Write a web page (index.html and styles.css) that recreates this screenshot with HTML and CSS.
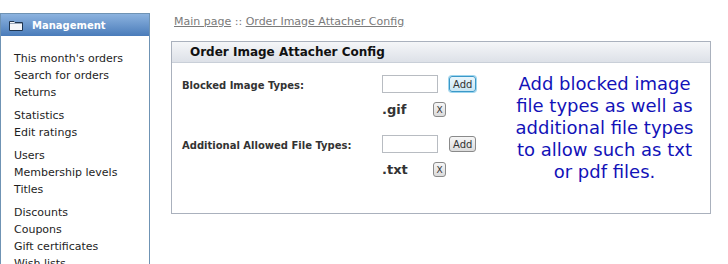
FILE: index.html
```html
<!DOCTYPE html>
<html lang="en">
<head>
    <meta charset="UTF-8">
    <title>Order Image Attacher Config</title>
    <link rel="stylesheet" href="styles.css">
</head>
<body>
    <div class="page">
        <div class="sidebar">
            <div class="side-head">
                <svg class="folder" width="14" height="11" viewBox="0 0 14 11">
                    <path d="M0.5 1.5 H5 L6 2.5 H13.5 V10.5 H0.5 Z" fill="#f4f6fa" stroke="#1f3550"/>
                    <path d="M1 3.5 H13" stroke="#9aa8bb"/>
                </svg>
                <span>Management</span>
            </div>
            <div class="side-links">
                <div class="group">
                    <a href="#">This month's orders</a>
                    <a href="#">Search for orders</a>
                    <a href="#">Returns</a>
                </div>
                <div class="group">
                    <a href="#">Statistics</a>
                    <a href="#">Edit ratings</a>
                </div>
                <div class="group">
                    <a href="#">Users</a>
                    <a href="#">Membership levels</a>
                    <a href="#">Titles</a>
                </div>
                <div class="group">
                    <a href="#">Discounts</a>
                    <a href="#">Coupons</a>
                    <a href="#">Gift certificates</a>
                    <a href="#">Wish lists</a>
                </div>
            </div>
        </div>

        <div class="main">
            <div class="crumbs">
                <a href="#">Main page</a> :: <a href="#">Order Image Attacher Config</a>
            </div>
            <div class="panel">
                <div class="panel-head">Order Image Attacher Config</div>
                <div class="panel-body">
                    <div class="fields">
                        <div class="field">
                            <div class="field-label">Blocked Image Types:</div>
                            <div class="field-controls">
                                <div class="add-row">
                                    <input type="text" class="type-input">
                                    <button class="btn btn-focus">Add</button>
                                </div>
                                <div class="type-row">
                                    <span class="ext">.gif</span>
                                    <button class="btn btn-x">X</button>
                                </div>
                            </div>
                        </div>
                        <div class="field">
                            <div class="field-label">Additional Allowed File Types:</div>
                            <div class="field-controls">
                                <div class="add-row">
                                    <input type="text" class="type-input">
                                    <button class="btn">Add</button>
                                </div>
                                <div class="type-row">
                                    <span class="ext">.txt</span>
                                    <button class="btn btn-x">X</button>
                                </div>
                            </div>
                        </div>
                    </div>
                    <div class="note">
                        Add blocked image file types as well as additional file types to allow such as txt or pdf files.
                    </div>
                </div>
            </div>
        </div>
    </div>
</body>
</html>
```

FILE: styles.css
```css
body {
    margin: 0;
    font-family: "DejaVu Sans", Verdana, sans-serif;
    background-color: #ffffff;
    color: #222222;
}
.page {
    display: flex;
    align-items: flex-start;
}
.sidebar {
    width: 148px;
    margin-top: 13px;
    border: 1px solid #6f93b4;
    border-bottom: none;
    height: 260px;
}
.side-head {
    height: 22px;
    display: flex;
    align-items: center;
    padding-left: 8px;
    background: linear-gradient(#8cb3df, #4a7cba);
    color: #ffffff;
    font-size: 10px;
    font-weight: bold;
}
.folder {
    margin-right: 9px;
}
.side-links {
    padding: 14px 0 0 13px;
}
.group {
    margin-bottom: 6px;
}
.side-links a {
    display: block;
    font-size: 11px;
    line-height: 17px;
    color: #1e1e1e;
    text-decoration: none;
}
.main {
    margin-left: 21px;
    width: 540px;
}
.crumbs {
    margin: 15px 0 0 3px;
    font-size: 11px;
    color: #7a7a7a;
    line-height: 14px;
}
.crumbs a {
    color: #7a7a7a;
}
.panel {
    margin-top: 12px;
    border: 1px solid #aab1bd;
    height: 171px;
}
.panel-head {
    height: 20px;
    line-height: 20px;
    padding-left: 18px;
    background: linear-gradient(#f5f6f8, #dde1e8);
    border-bottom: 1px solid #c9cfd8;
    font-size: 12px;
    font-weight: bold;
    color: #111111;
}
.panel-body {
    display: flex;
}
.fields {
    width: 310px;
    padding: 12px 0 0 10px;
}
.field {
    display: flex;
    margin-bottom: 18px;
}
.field-label {
    width: 200px;
    padding-top: 5px;
    font-size: 10px;
    font-weight: bold;
    color: #333333;
}
.add-row {
    display: flex;
    align-items: center;
}
.type-input {
    width: 52px;
    height: 14px;
    padding: 1px;
    border: 1px solid #b8bcc2;
    margin: 0;
}
.btn {
    margin-left: 11px;
    height: 16px;
    padding: 0 3px;
    font-family: "DejaVu Sans", Verdana, sans-serif;
    font-size: 10px;
    color: #333333;
    background: linear-gradient(#f6f6f6, #dcdcdc);
    border: 1px solid #8a8a8a;
    border-radius: 3px;
}
.btn-focus {
    border-color: #3a98c8;
    box-shadow: 0 0 0 1px #9fd6ef;
    background: linear-gradient(#eaf6fc, #c9e6f4);
}
.type-row {
    display: flex;
    align-items: center;
    margin-top: 9px;
}
.ext {
    width: 51px;
    font-size: 13px;
    font-weight: bold;
    color: #333333;
}
.btn-x {
    margin-left: 0;
    width: 13px;
    height: 15px;
    padding: 0;
    font-size: 9px;
}
.note {
    width: 185px;
    margin: 10px 0 0 20px;
    text-align: center;
    font-size: 18px;
    line-height: 22px;
    color: #1212b8;
}
```
